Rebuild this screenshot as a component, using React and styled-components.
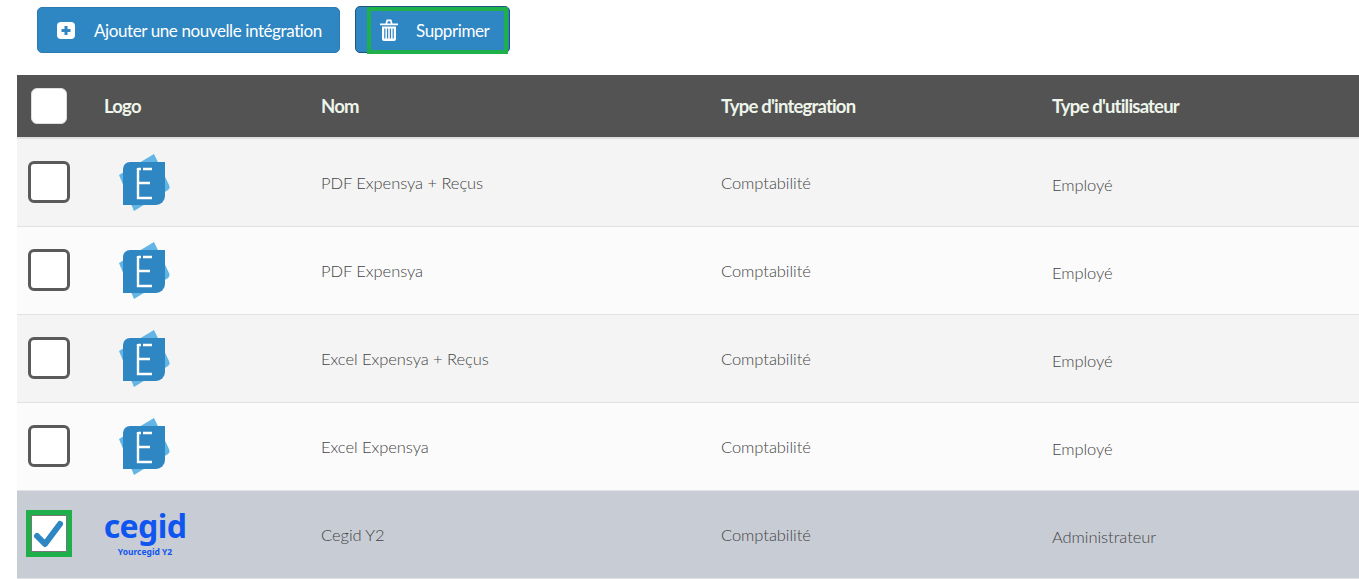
import React from "react";
import styled, { createGlobalStyle } from "styled-components";

const GlobalStyle = createGlobalStyle`
  html, body {
    margin: 0;
    padding: 0;
    background: #fff;
    font-family: "Lato", "Liberation Sans", sans-serif;
  }
`;

const rows = [
  { name: "PDF Expensya + Reçus", type: "Comptabilité", user: "Employé" },
  { name: "PDF Expensya", type: "Comptabilité", user: "Employé" },
  { name: "Excel Expensya + Reçus", type: "Comptabilité", user: "Employé" },
  { name: "Excel Expensya", type: "Comptabilité", user: "Employé" },
  { name: "Cegid Y2", type: "Comptabilité", user: "Administrateur", selected: true },
];

const Page = styled.div`
  width: 1359px;
  height: 579px;
  overflow: hidden;
`;

const Toolbar = styled.div`
  display: flex;
  align-items: flex-start;
  gap: 15px;
  height: 75px;
  padding: 6px 0 0 37px;
  box-sizing: border-box;
`;

const ActionButton = styled.button`
  position: relative;
  display: flex;
  align-items: center;
  width: ${(p) => p.$width}px;
  height: ${(p) => p.$height}px;
  margin-top: ${(p) => p.$top}px;
  padding: 1px 0 0 ${(p) => p.$pad}px;
  box-sizing: border-box;
  background: #2e86c3;
  border: 1px solid ${(p) => p.$border};
  border-radius: 5px;
  color: #fff;
  font-family: inherit;
  font-size: 17px;
  letter-spacing: -0.4px;
`;

const ButtonIcon = styled.span`
  display: flex;
  width: ${(p) => p.$width}px;
  flex: none;
`;

const Highlight = styled.span`
  position: absolute;
  left: 11px;
  top: 0;
  width: 141px;
  height: 47px;
  box-sizing: border-box;
  border: 4px solid #20b04b;
`;

const Table = styled.div`
  margin-left: 17px;
`;

const Row = styled.div`
  display: grid;
  grid-template-columns: 87px 217px 400px 331px 1fr;
  align-items: center;
  box-sizing: border-box;
  height: ${(p) => p.$height}px;
  padding-bottom: ${(p) => p.$lift}px;
  background: ${(p) => p.$bg};
  border-bottom: ${(p) => p.$rule}px solid ${(p) => p.$line};
`;

const HeadCell = styled.div`
  color: #eef5ea;
  font-size: 18.5px;
  font-weight: 700;
  letter-spacing: -0.8px;
`;

const Cell = styled.div`
  color: #444;
  font-size: 16.5px;
  font-weight: 300;
  letter-spacing: -0.05px;
  padding-top: ${(p) => p.$drop}px;
`;

const BoxCell = styled.div`
  position: relative;
  display: flex;
  padding-left: ${(p) => p.$left}px;
`;

const Box = styled.span`
  display: block;
  box-sizing: border-box;
  width: ${(p) => p.$size}px;
  height: ${(p) => p.$size}px;
  background: #fff;
  border: ${(p) => (p.$plain ? "1px solid #ddd" : "3px solid #5a5a5a")};
  border-radius: 6px;
`;

const CheckFrame = styled.span`
  display: flex;
  align-items: center;
  justify-content: center;
  box-sizing: border-box;
  width: 46px;
  height: 47px;
  border: 5px solid #20b04b;
  background: #fff;
  box-shadow: inset 0 0 0 1px #777;
`;

const CegidLogo = styled.div`
  display: flex;
  flex-direction: column;
  align-items: center;
  width: 82px;
  color: #0f55f0;
`;

const CegidName = styled.span`
  font-family: "Noto Sans", sans-serif;
  font-size: 32px;
  font-weight: 700;
  line-height: 34px;
  letter-spacing: -0.6px;
`;

const CegidSub = styled.span`
  font-family: "Noto Sans", sans-serif;
  font-size: 8.5px;
  font-weight: 700;
  line-height: 12px;
  margin-top: 3px;
`;

const LogoCell = styled.div`
  display: flex;
  padding-left: 13px;
`;

const PlusIcon = () => (
  <svg width="18" height="17" viewBox="0 0 18 17">
    <rect width="18" height="17" rx="4" fill="#fff" />
    <path d="M9 4v9M4.5 8.5h9" stroke="#2e86c3" strokeWidth="3" />
  </svg>
);

const TrashIcon = () => (
  <svg width="18" height="22" viewBox="0 0 18 22" fill="#fff">
    <path d="M0 4.5h18v1.8H0zM5.5 4.5 6.6.6h4.8l1.1 3.9h-1.7l-.7-2.3H7.9l-.7 2.3z" />
    <path d="M2 7.5h14V20a2 2 0 0 1-2 2H4a2 2 0 0 1-2-2z" />
    <path d="M4.8 9.5v10M7.6 9.5v10M10.4 9.5v10M13.2 9.5v10" stroke="#2e86c3" strokeWidth="1.2" />
  </svg>
);

const CheckIcon = () => (
  <svg width="32" height="30" viewBox="0 0 32 30">
    <path d="M4 17l8 8L27 5" fill="none" stroke="#2e86c3" strokeWidth="6" strokeLinecap="round" strokeLinejoin="round" />
  </svg>
);

const ExpensyaLogo = () => (
  <svg width="54" height="60" viewBox="0 0 54 60">
    <path d="M2 23 37 2l15 31a4 4 0 0 1-1 5L17 59z" fill="#62b5e4" />
    <path d="M13 10a7 7 0 0 0-7 7v36h33a9 9 0 0 0 9-9V10z" fill="#2e86c3" />
    <path d="M21 16v30h14M21 31h12M21 17h3M26 17h9" fill="none" stroke="#fff" strokeWidth="2.4" />
  </svg>
);

const App = () => {
  return (
    <Page>
      <GlobalStyle />
      <Toolbar>
        <ActionButton $width={303} $height={46} $top={1} $pad={19} $border="#2b7bb2">
          <ButtonIcon $width={37}>
            <PlusIcon />
          </ButtonIcon>
          Ajouter une nouvelle intégration
        </ActionButton>
        <ActionButton $width={155} $height={47} $top={0} $pad={24} $border="#1d5480">
          <ButtonIcon $width={36}>
            <TrashIcon />
          </ButtonIcon>
          Supprimer
          <Highlight />
        </ActionButton>
      </Toolbar>
      <Table>
        <Row $height={64} $lift={0} $bg="#535353" $line="#e0e0e0" $rule={2}>
          <BoxCell $left={14}>
            <Box $size={36} $plain />
          </BoxCell>
          <HeadCell>Logo</HeadCell>
          <HeadCell>Nom</HeadCell>
          <HeadCell>Type d'integration</HeadCell>
          <HeadCell>Type d'utilisateur</HeadCell>
        </Row>
        {rows.map((row, index) => (
          <Row
            key={index}
            $height={88}
            $lift={2}
            $bg={row.selected ? "#c8ccd5" : index % 2 === 0 ? "#f4f4f4" : "#fbfbfb"}
            $line="#e2e2e2"
            $rule={1}
          >
            <BoxCell $left={row.selected ? 9 : 11}>
              {row.selected ? (
                <CheckFrame>
                  <CheckIcon />
                </CheckFrame>
              ) : (
                <Box $size={42} />
              )}
            </BoxCell>
            {row.selected ? (
              <CegidLogo>
                <CegidName>cegid</CegidName>
                <CegidSub>Yourcegid Y2</CegidSub>
              </CegidLogo>
            ) : (
              <LogoCell>
                <ExpensyaLogo />
              </LogoCell>
            )}
            <Cell $drop={2}>{row.name}</Cell>
            <Cell $drop={2}>{row.type}</Cell>
            <Cell $drop={7}>{row.user}</Cell>
          </Row>
        ))}
      </Table>
    </Page>
  );
};

export default App;
